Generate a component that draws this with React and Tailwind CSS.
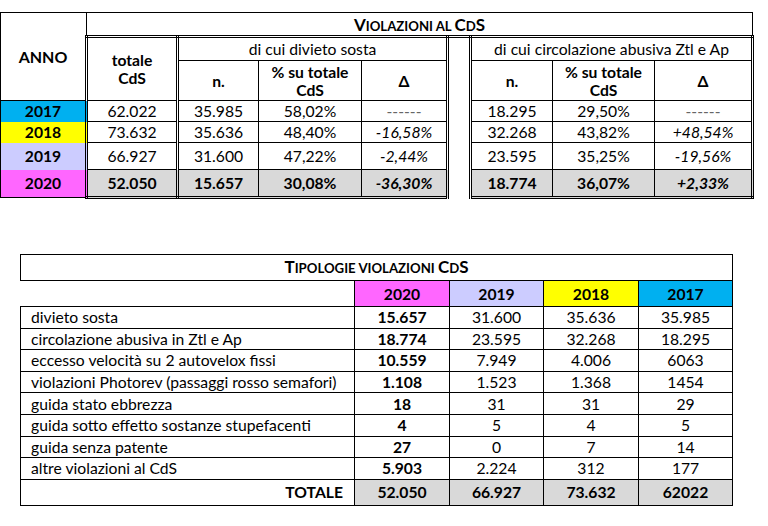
import React from 'react';

const yearColors = {
  2017: 'bg-[#00b0f0]',
  2018: 'bg-[#ffff00]',
  2019: 'bg-[#ccccff]',
  2020: 'bg-[#ff66ff]',
};

const topRows = [
  { anno: 2017, tot: '62.022', n1: '35.985', p1: '58,02%', d1: '------', n2: '18.295', p2: '29,50%', d2: '------', h: 'h-[21px]' },
  { anno: 2018, tot: '73.632', n1: '35.636', p1: '48,40%', d1: '-16,58%', n2: '32.268', p2: '43,82%', d2: '+48,54%', h: 'h-[21px]' },
  { anno: 2019, tot: '66.927', n1: '31.600', p1: '47,22%', d1: '-2,44%', n2: '23.595', p2: '35,25%', d2: '-19,56%', h: 'h-[27px]' },
  { anno: 2020, tot: '52.050', n1: '15.657', p1: '30,08%', d1: '-36,30%', n2: '18.774', p2: '36,07%', d2: '+2,33%', h: 'h-[28px]', last: true },
];

const tipologie = [
  ['divieto sosta', '15.657', '31.600', '35.636', '35.985'],
  ['circolazione abusiva in Ztl e Ap', '18.774', '23.595', '32.268', '18.295'],
  ['eccesso velocità su 2 autovelox fissi', '10.559', '7.949', '4.006', '6063'],
  ['violazioni Photorev (passaggi rosso semafori)', '1.108', '1.523', '1.368', '1454'],
  ['guida stato ebbrezza', '18', '31', '31', '29'],
  ['guida sotto effetto sostanze stupefacenti', '4', '5', '4', '5'],
  ['guida senza patente', '27', '0', '7', '14'],
  ['altre violazioni al CdS', '5.903', '2.224', '312', '177'],
];

const dbl = 'border-double border-black';

// Excel-like small caps: full-size capitals, smaller uppercase for the rest
const Caps = ({ parts }) => (
  <span className="font-bold text-[17px]">
    {parts.map(([big, small], i) => (
      <React.Fragment key={i}>
        {big}
        <span className="text-[13.2px]">{small}</span>
      </React.Fragment>
    ))}
  </span>
);

const ViolazioniTable = () => (
  <table className="table-fixed border-collapse w-[752px] text-[15.7px] leading-[18px] text-black">
    <colgroup>
      <col className="w-[86px]" />
      <col className="w-[91px]" />
      <col className="w-[81px]" />
      <col className="w-[103px]" />
      <col className="w-[86px]" />
      <col className="w-[23px]" />
      <col className="w-[82px]" />
      <col className="w-[102px]" />
      <col className="w-[98px]" />
    </colgroup>
    <tbody>
      <tr className="h-[24px]">
        <td rowSpan={3} className="border border-black p-0 text-center font-bold text-[16px]">ANNO</td>
        <td colSpan={8} className="border border-black p-0 pt-[2px] text-center">
          <Caps parts={[['V', 'IOLAZIONI AL '], ['C', 'D'], ['S', '']]} />
        </td>
      </tr>
      <tr className="h-[24px]">
        <td rowSpan={2} className={`${dbl} border-l-[3px] border-t-[3px] border-r-[3px] border-b p-0 text-center font-bold`}>
          totale<br />CdS
        </td>
        <td colSpan={3} className={`${dbl} border-t-[3px] border-r-[3px] border-b p-0 text-center`}>di cui divieto sosta</td>
        <td rowSpan={6} className={`${dbl} border-x-[3px] border-t-[3px] border-b-0 p-0`}></td>
        <td colSpan={3} className={`${dbl} border-t-[3px] border-x-[3px] border-b p-0 text-center`}>di cui circolazione abusiva Ztl e Ap</td>
      </tr>
      <tr className="h-[40px] font-bold">
        <td className="border border-black p-0 text-center">n.</td>
        <td className="border border-black p-0 text-center">% su totale<br />CdS</td>
        <td className={`${dbl} border-l border-b border-r-[3px] p-0 text-center`}>Δ</td>
        <td className={`${dbl} border-l-[3px] border-b border-r p-0 text-center`}>n.</td>
        <td className="border border-black p-0 text-center">% su totale<br />CdS</td>
        <td className={`${dbl} border-l border-b border-r-[3px] p-0 text-center`}>Δ</td>
      </tr>
      {topRows.map((r) => {
        const bb = r.last ? 'border-b-[3px]' : 'border-b';
        const cell = r.last ? 'bg-[#d9d9d9] font-bold' : '';
        const dash = (v) => (v === '------' ? 'text-[#666] not-italic' : '');
        return (
          <tr key={r.anno} className={r.h}>
            <td className={`border-x border-black ${r.last ? 'border-b' : ''} ${yearColors[r.anno]} p-0 text-center font-bold`}>
              {r.anno}
            </td>
            <td className={`${dbl} border-x-[3px] ${bb} ${cell} p-0 text-center`}>{r.tot}</td>
            <td className={`${dbl} border-l-[3px] border-r ${bb} ${cell} p-0 text-center`}>{r.n1}</td>
            <td className={`${dbl} border-x ${bb} ${cell} p-0 text-center`}>{r.p1}</td>
            <td className={`${dbl} border-l border-r-[3px] ${bb} ${cell} p-0 text-center italic ${dash(r.d1)}`}>{r.d1}</td>
            <td className={`${dbl} border-l-[3px] border-r ${bb} ${cell} p-0 text-center`}>{r.n2}</td>
            <td className={`${dbl} border-x ${bb} ${cell} p-0 text-center`}>{r.p2}</td>
            <td className={`${dbl} border-l border-r-[3px] ${bb} ${cell} p-0 text-center italic ${dash(r.d2)}`}>{r.d2}</td>
          </tr>
        );
      })}
    </tbody>
  </table>
);

const TipologieTable = () => (
  <table className="table-fixed border-collapse w-[712px] text-[15.7px] leading-[18px] text-black">
    <colgroup>
      <col className="w-[334px]" />
      <col className="w-[95px]" />
      <col className="w-[94px]" />
      <col className="w-[95px]" />
      <col className="w-[94px]" />
    </colgroup>
    <tbody>
      <tr className="h-[26px]">
        <td colSpan={5} className="border border-black p-0 text-center">
          <Caps parts={[['T', 'IPOLOGIE VIOLAZIONI '], ['C', 'D'], ['S', '']]} />
        </td>
      </tr>
      <tr className="h-[26px] font-bold">
        <td className="p-0"></td>
        {[2020, 2019, 2018, 2017].map((y) => (
          <td key={y} className={`border border-black p-0 text-center ${yearColors[y]}`}>{y}</td>
        ))}
      </tr>
      {tipologie.map((row) => (
        <tr key={row[0]} className="h-[21.6px]">
          <td className="border border-black p-0 pl-[10px] text-left whitespace-nowrap">{row[0]}</td>
          {row.slice(1).map((v, i) => (
            <td key={i} className={`border border-black p-0 text-center ${i === 0 ? 'font-bold' : ''}`}>{v}</td>
          ))}
        </tr>
      ))}
      <tr className="h-[26px] font-bold">
        <td className="border border-black p-0 pr-[11px] text-right">TOTALE</td>
        {['52.050', '66.927', '73.632', '62022'].map((v) => (
          <td key={v} className="border border-black p-0 text-center bg-[#d9d9d9]">{v}</td>
        ))}
      </tr>
    </tbody>
  </table>
);

export default function App() {
  return (
    <div className="w-[768px] h-[526px] bg-white pt-[12px] font-['Lato',sans-serif] overflow-hidden">
      <ViolazioniTable />
      <div className="mt-[55px] ml-[20px]">
        <TipologieTable />
      </div>
    </div>
  );
}
